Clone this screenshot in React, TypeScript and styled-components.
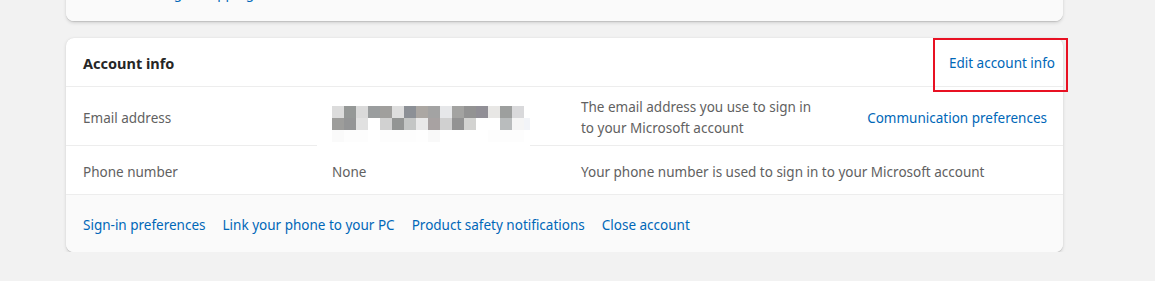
import React from 'react';
import styled, { createGlobalStyle } from 'styled-components';

const GlobalStyle = createGlobalStyle`
  html, body {
    margin: 0;
    padding: 0;
    background: #f2f2f2;
    overflow: hidden;
  }
  *, *::before, *::after {
    box-sizing: border-box;
  }
  body {
    font-family: "Noto Sans", "Open Sans", sans-serif;
    font-size: 13.5px;
    color: #616161;
  }
`;

const Page = styled.div`
  width: 997px;
  margin-left: 66px;
  display: flex;
  flex-direction: column;
  gap: 17px;
`;

const Card = styled.section<{ $peek?: boolean }>`
  background: #fff;
  border-radius: 8px;
  box-shadow: 0 1.6px 3.6px rgba(0, 0, 0, 0.13), 0 0.3px 0.9px rgba(0, 0, 0, 0.11);
  margin-top: ${({ $peek }) => ($peek ? '-37px' : '0')};
`;

const CardHeader = styled.div`
  height: 48px;
  display: flex;
  align-items: center;
  justify-content: space-between;
  padding: 2px 8px 0 17px;
`;

const CardTitle = styled.h2`
  margin: 0;
  font-size: 14.5px;
  font-weight: 700;
  color: #262626;
`;

const Link = styled.a`
  color: #0067b8;
  text-decoration: none;
  line-height: 20px;
  white-space: nowrap;
  cursor: pointer;
`;

const HighlightedLink = styled(Link)`
  position: relative;
  display: inline-block;

  &::after {
    content: '';
    position: absolute;
    left: -16px;
    right: -13px;
    top: -15px;
    bottom: -19px;
    border: 2px solid #e81123;
    pointer-events: none;
  }
`;

const Row = styled.div<{ $height: number; $offset?: number }>`
  display: grid;
  grid-template-columns: 249px 249px 1fr auto;
  align-items: center;
  height: ${({ $height }) => $height}px;
  padding: ${({ $offset = 0 }) => $offset}px 16px 0 17px;
  border-top: 1px solid #ededed;
`;

const Label = styled.div`
  line-height: 21px;
`;

const Value = styled.div`
  line-height: 21px;
`;

const Description = styled.div<{ $wide?: boolean }>`
  line-height: 21px;
  max-width: ${({ $wide }) => ($wide ? 'none' : '240px')};
  grid-column: ${({ $wide }) => ($wide ? '3 / 5' : 'auto')};
`;

const Masked = styled.div`
  position: relative;
  z-index: 1;
  align-self: start;
  margin: 12px 0 0 -15px;
  width: 213px;
  height: 48px;
  padding: 6px 0 0 15px;
  background: #fff;
  overflow: hidden;
`;

const Mosaic = styled.div`
  display: grid;
  grid-template-columns: repeat(17, 12px);
  grid-auto-rows: 12px;
`;

const Cell = styled.span<{ $c: string }>`
  background: ${({ $c }) => $c};
`;

const Footer = styled.div`
  display: flex;
  align-items: center;
  gap: 17px;
  height: 58px;
  padding: 2px 17px 0;
  background: #fafafa;
  border-top: 1px solid #ededed;
  border-radius: 0 0 8px 8px;
`;

const PeekFooter = styled.div`
  background: #fafafa;
  border-radius: 8px;
  padding: 20px 17px 18px;
  display: flex;
  gap: 17px;
`;

const mosaicRows = [
  ['#dcdcdc', '#959897', '#dadada', '#9a9d9e', '#a09f9d', '#dedede', '#8c9096', '#aba7a3', '#a3a3a3', '#e6e7e9', '#a3a3a1', '#939393', '#918f96', '#e8e7e5', '#9d9f9e', '#d9d9db', '#ffffff'],
  ['#9d9d9b', '#949596', '#e1e1e1', '#ffffff', '#d1d1d1', '#939594', '#c4c6c5', '#e9e9e9', '#a8a2a2', '#d0d0d0', '#939393', '#d3d3d1', '#ffffff', '#ffffff', '#b9bcbd', '#f5f5f5', '#f2f4f8'],
  ['#fafafa', '#fdfdfd', '#fdfdfd', '#ffffff', '#fdfdfd', '#fdfdfd', '#fdfdfd', '#fefefe', '#f9f9f9', '#ffffff', '#ffffff', '#ffffff', '#ffffff', '#fdfdfd', '#fdfdfd', '#fdfdfd', '#ffffff'],
];

const footerLinks = [
  'Sign-in preferences',
  'Link your phone to your PC',
  'Product safety notifications',
  'Close account',
];

export default function App() {
  return (
    <>
      <GlobalStyle />
      <Page>
        <Card $peek>
          <PeekFooter>
            <Link>Add, edit billing &amp; shipping addresses</Link>
          </PeekFooter>
        </Card>

        <Card>
          <CardHeader>
            <CardTitle>Account info</CardTitle>
            <HighlightedLink>Edit account info</HighlightedLink>
          </CardHeader>

          <Row $height={59} $offset={1}>
            <Label>Email address</Label>
            <Masked>
              <Mosaic>
                {mosaicRows.flat().map((c, i) => (
                  <Cell key={i} $c={c} />
                ))}
              </Mosaic>
            </Masked>
            <Description>The email address you use to sign in to your Microsoft account</Description>
            <Link>Communication preferences</Link>
          </Row>

          <Row $height={49} $offset={4}>
            <Label>Phone number</Label>
            <Value>None</Value>
            <Description $wide>Your phone number is used to sign in to your Microsoft account</Description>
          </Row>

          <Footer>
            {footerLinks.map((l) => (
              <Link key={l}>{l}</Link>
            ))}
          </Footer>
        </Card>
      </Page>
    </>
  );
}
